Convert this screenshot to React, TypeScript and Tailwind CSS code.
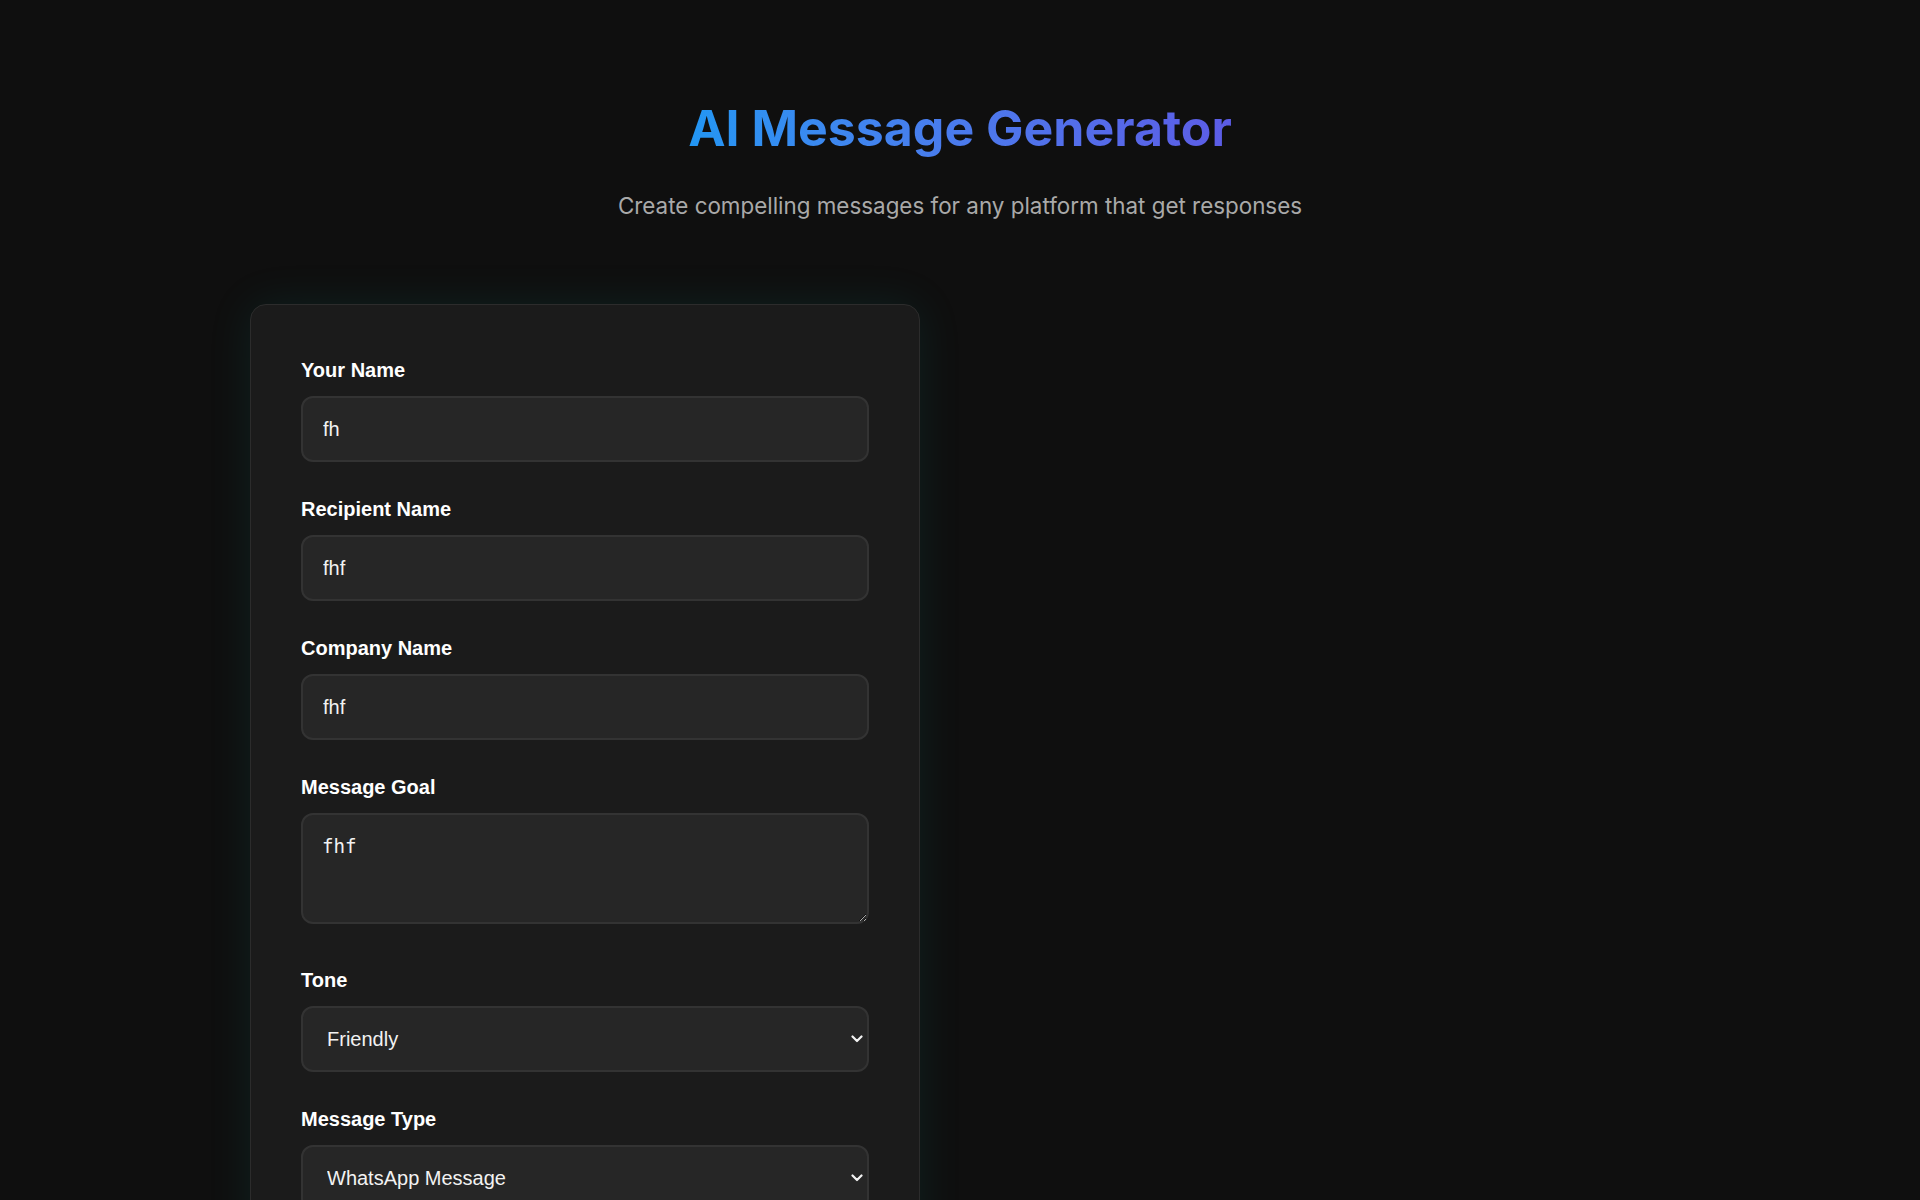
import { useState } from "react";

const fields = [
  { id: "yourName", label: "Your Name" },
  { id: "recipientName", label: "Recipient Name" },
  { id: "companyName", label: "Company Name" },
];

const tones = ["Professional", "Friendly", "Casual", "Formal", "Persuasive"];
const messageTypes = ["LinkedIn Message", "Cold Email", "WhatsApp Message", "Twitter DM", "Follow-up Email"];

const inputClass =
  "w-full h-[66px] rounded-[12px] border-2 border-[#333333] bg-[#262626] px-[20px] text-[20px] text-[#f2f2f2] outline-none [font-family:'Liberation_Sans',Arial,sans-serif] focus:border-[#2196f3]";

const labelClass =
  "block mb-[14px] text-[20px] leading-[23px] font-semibold text-white [font-family:'Liberation_Sans',Arial,sans-serif]";

const SelectField = ({
  id,
  label,
  value,
  options,
  onChange,
}: {
  id: string;
  label: string;
  value: string;
  options: string[];
  onChange: (v: string) => void;
}) => (
  <div className="mb-[36px]">
    <label htmlFor={id} className={labelClass}>
      {label}
    </label>
    <div className="relative">
      <select
        id={id}
        value={value}
        onChange={(e) => onChange(e.target.value)}
        className={`${inputClass} appearance-none pl-[24px] pr-[40px]`}
      >
        {options.map((o) => (
          <option key={o}>{o}</option>
        ))}
      </select>
      {/* native-looking dropdown chevron */}
      <svg
        className="pointer-events-none absolute right-[6px] top-1/2 -translate-y-1/2"
        width="12"
        height="8"
        viewBox="0 0 12 8"
        fill="none"
      >
        <path d="M1.5 1.5 6 6l4.5-4.5" stroke="#f2f2f2" strokeWidth="2.2" strokeLinecap="round" strokeLinejoin="round" />
      </svg>
    </div>
  </div>
);

const App = () => {
  const [values, setValues] = useState<Record<string, string>>({
    yourName: "fh",
    recipientName: "fhf",
    companyName: "fhf",
    goal: "fhf",
    tone: "Friendly",
    type: "WhatsApp Message",
  });

  const update = (key: string, v: string) => setValues((prev) => ({ ...prev, [key]: v }));

  return (
    <div className="min-h-screen bg-[#0f0f0f] [color-scheme:dark] font-['Inter',sans-serif] pb-20">
      <header className="pt-[96px] pb-[81px] text-center">
        <h1 className="text-[50px] leading-[64px] font-bold bg-gradient-to-r from-[#2196f3] to-[#5c5ce6] bg-clip-text text-transparent inline-block">
          AI Message Generator
        </h1>
        <p className="mt-[29px] text-[22.4px] leading-[34px] text-[#a9a9a9]">
          Create compelling messages for any platform that get responses
        </p>
      </header>

      <main className="max-w-[1420px] mx-auto grid grid-cols-2 gap-20">
        <section className="rounded-[16px] border border-[#2c2c2c] bg-[#1b1b1b] px-[50px] pt-[54px] pb-[50px] shadow-[0_0_45px_rgba(0,190,175,0.1)]">
          {fields.map((field) => (
            <div key={field.id} className="mb-[36px]">
              <label htmlFor={field.id} className={labelClass}>
                {field.label}
              </label>
              <input
                id={field.id}
                type="text"
                value={values[field.id]}
                onChange={(e) => update(field.id, e.target.value)}
                className={inputClass}
              />
            </div>
          ))}

          <div className="mb-[45px]">
            <label htmlFor="goal" className={labelClass}>
              Message Goal
            </label>
            <textarea
              id="goal"
              value={values.goal}
              onChange={(e) => update("goal", e.target.value)}
              className="block w-full h-[111px] rounded-[12px] border-2 border-[#333333] bg-[#262626] px-[19px] py-[21px] text-[19.2px] leading-[22px] text-[#f2f2f2] outline-none [font-family:'DejaVu_Sans_Mono',monospace]"
            />
          </div>

          <SelectField id="tone" label="Tone" value={values.tone} options={tones} onChange={(v) => update("tone", v)} />
          <SelectField
            id="type"
            label="Message Type"
            value={values.type}
            options={messageTypes}
            onChange={(v) => update("type", v)}
          />

          <button className="w-full h-[62px] rounded-[12px] bg-gradient-to-r from-[#2196f3] to-[#5c5ce6] text-[20px] font-semibold text-white">
            Generate Message
          </button>
        </section>

        <section />
      </main>
    </div>
  );
};

export default App;
